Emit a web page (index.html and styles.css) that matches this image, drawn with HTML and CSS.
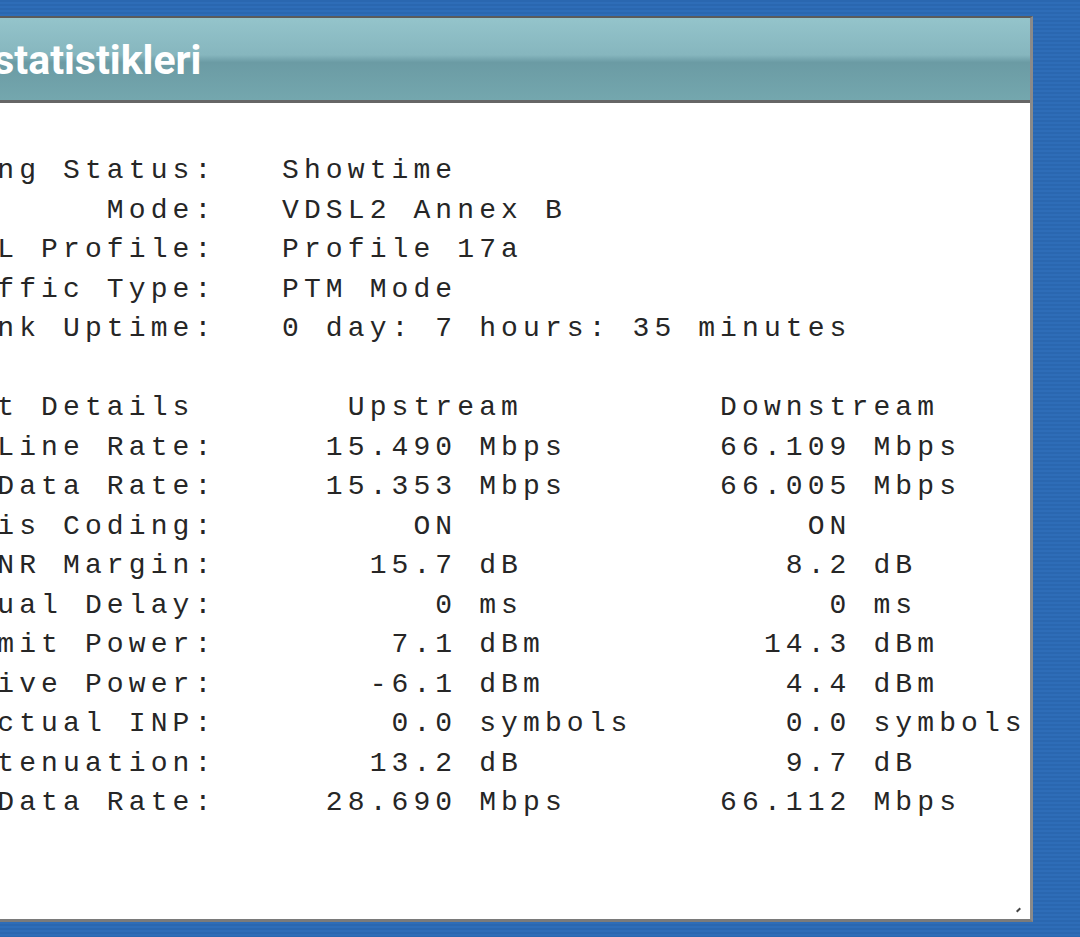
FILE: index.html
```html
<!DOCTYPE html>
<html lang="tr">
  <head>
    <meta charset="UTF-8" />
    <meta name="viewport" content="width=device-width, initial-scale=1.0" />
    <title>DSL İstatistikleri</title>
    <link rel="stylesheet" href="styles.css">
  </head>
  <body>
    <div class="window">
      <header class="window-title">
        <h1>DSL İstatistikleri</h1>
      </header>

      <div class="window-body">
<pre class="stats"> Training Status:   Showtime
            Mode:   VDSL2 Annex B
    VDSL Profile:   Profile 17a
    Traffic Type:   PTM Mode
     Link Uptime:   0 day: 7 hours: 35 minutes

    Port Details       Upstream         Downstream
       Line Rate:     15.490 Mbps       66.109 Mbps
Actual Data Rate:     15.353 Mbps       66.005 Mbps
  Trellis Coding:         ON                ON
      SNR Margin:       15.7 dB            8.2 dB
    Actual Delay:          0 ms              0 ms
  Transmit Power:        7.1 dBm          14.3 dBm
   Receive Power:       -6.1 dBm           4.4 dBm
      Actual INP:        0.0 symbols       0.0 symbols
     Attenuation:       13.2 dB            9.7 dB
   Max Data Rate:     28.690 Mbps       66.112 Mbps</pre>
        <span class="grip"></span>
      </div>
    </div>
  </body>
</html>
```

FILE: styles.css
```css
/* 基本样式 */
* {
  margin: 0;
  padding: 0;
  box-sizing: border-box;
}

html,
body {
  height: 100%;
  overflow: hidden;
}

body {
  background-color: #2c6ab4;
  background-image: repeating-linear-gradient(
    to bottom,
    #2a67b0 0,
    #2a67b0 2px,
    #2e6db8 2px,
    #2e6db8 4px
  );
}

/* 窗口 */
.window {
  width: 1213px;
  margin: 16px 0 0 -180px;
  border-top: 2px solid #5b5b5b;
  border-right: 3px solid #8a8a8a;
  border-bottom: 3px solid #7a7a7a;
  background-color: #fff;
}

.window-title {
  height: 85px;
  display: flex;
  align-items: center;
  padding-left: 77px;
  border-bottom: 3px solid #666;
  background: linear-gradient(
    to bottom,
    #94c4cb 0%,
    #86b6be 45%,
    #6b9ba4 54%,
    #74a7ae 100%
  );
}

.window-title h1 {
  color: #fff;
  font-family: Roboto, "Liberation Sans", sans-serif;
  font-size: 41px;
  font-weight: 700;
  line-height: 1;
  padding-top: 2px;
}

.window-body {
  position: relative;
  height: 816px;
  overflow: hidden;
}

/* 统计文本 */
.stats {
  padding: 48px 0 0 24px;
  font-family: "Liberation Mono", "DejaVu Sans Mono", monospace;
  font-size: 28px;
  line-height: 39.5px;
  letter-spacing: 5.1px;
  color: #262626;
}

.grip {
  position: absolute;
  right: 9px;
  bottom: 8px;
  width: 5px;
  height: 2px;
  background-color: #444;
  transform: rotate(-45deg);
}
```
